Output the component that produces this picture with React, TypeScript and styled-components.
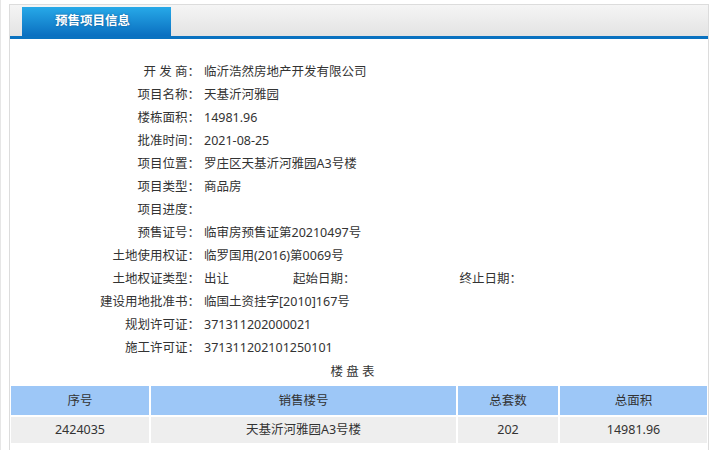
import React from "react";
import styled, { createGlobalStyle } from "styled-components";

const Global = createGlobalStyle`
  html, body { margin: 0; padding: 0; background: #fff; }
  body { font-family: "Noto Sans", "Noto Sans CJK SC", sans-serif; font-size: 12.5px; color: #333; }
`;

const Page = styled.div`
  border-left: 1px solid #e6e6e6;
  padding: 4px 0 0 8px;
  height: 446px;
  overflow: hidden;
`;

const Panel = styled.div`
  width: 698px;
  border: 1px solid #dcdcdc;
  border-bottom: none;
  height: 460px;
`;

const Header = styled.div`
  height: 31px;
  background: linear-gradient(#f5f5f5, #e3e3e3);
  border-bottom: 3px solid #0a72c0;
  display: flex;
  align-items: flex-end;
  padding-left: 12px;
`;

const Tab = styled.div`
  width: 149px;
  height: 29px;
  box-sizing: border-box;
  padding-left: 33px;
  background: linear-gradient(#27a9e8, #0a6fc0);
  color: #fff;
  font-weight: bold;
  font-size: 12.5px;
  line-height: 28px;
  text-shadow: 0 0 2px rgba(0, 40, 90, 0.5);
`;

const Body = styled.div`
  padding-top: 21px;
`;

const Row = styled.div`
  display: flex;
  height: 23px;
  line-height: 23px;
  white-space: nowrap;
`;

const Label = styled.span<{ $w?: number }>`
  width: ${(p) => p.$w ?? 190}px;
  text-align: right;
  flex: none;
  color: #333;
`;

const Value = styled.span<{ $w?: number }>`
  padding-left: 4px;
  ${(p) => (p.$w ? `width: ${p.$w}px; flex: none;` : "")}
  color: #333;
`;

const Caption = styled.div`
  height: 23px;
  line-height: 23px;
  text-align: center;
  padding-right: 13px;
  margin-top: 1px;
`;

const Grid = styled.div`
  display: grid;
  grid-template-columns: 138px 305px 100px 147px;
  column-gap: 2px;
  row-gap: 2px;
  margin: 3px 0 0 1px;
`;

const Cell = styled.div<{ $head?: boolean }>`
  background: ${(p) => (p.$head ? "#9dc7f7" : "#eeeeee")};
  height: ${(p) => (p.$head ? 29 : 26)}px;
  line-height: ${(p) => (p.$head ? 29 : 26)}px;
  text-align: center;
  color: #333;
`;

const rows: [string, string][] = [
  ["开 发 商：", "临沂浩然房地产开发有限公司"],
  ["项目名称：", "天基沂河雅园"],
  ["楼栋面积：", "14981.96"],
  ["批准时间：", "2021-08-25"],
  ["项目位置：", "罗庄区天基沂河雅园A3号楼"],
  ["项目类型：", "商品房"],
  ["项目进度：", ""],
  ["预售证号：", "临审房预售证第20210497号"],
  ["土地使用权证：", "临罗国用(2016)第0069号"],
];

const rows2: [string, string][] = [
  ["建设用地批准书：", "临国土资挂字[2010]167号"],
  ["规划许可证：", "371311202000021"],
  ["施工许可证：", "371311202101250101"],
];

export default function App() {
  return (
    <>
      <Global />
      <Page>
        <Panel>
          <Header>
            <Tab>预售项目信息</Tab>
          </Header>
          <Body>
            {rows.map(([l, v]) => (
              <Row key={l}>
                <Label>{l}</Label>
                <Value>{v}</Value>
              </Row>
            ))}
            <Row>
              <Label>土地权证类型：</Label>
              <Value $w={89}>出让</Value>
              <Label $w={62}>起始日期：</Label>
              <Value $w={97}></Value>
              <Label $w={66}>终止日期：</Label>
              <Value></Value>
            </Row>
            {rows2.map(([l, v]) => (
              <Row key={l}>
                <Label>{l}</Label>
                <Value>{v}</Value>
              </Row>
            ))}
            <Caption>楼 盘 表</Caption>
            <Grid>
              <Cell $head>序号</Cell>
              <Cell $head>销售楼号</Cell>
              <Cell $head>总套数</Cell>
              <Cell $head>总面积</Cell>
              <Cell>2424035</Cell>
              <Cell>天基沂河雅园A3号楼</Cell>
              <Cell>202</Cell>
              <Cell>14981.96</Cell>
            </Grid>
          </Body>
        </Panel>
      </Page>
    </>
  );
}
